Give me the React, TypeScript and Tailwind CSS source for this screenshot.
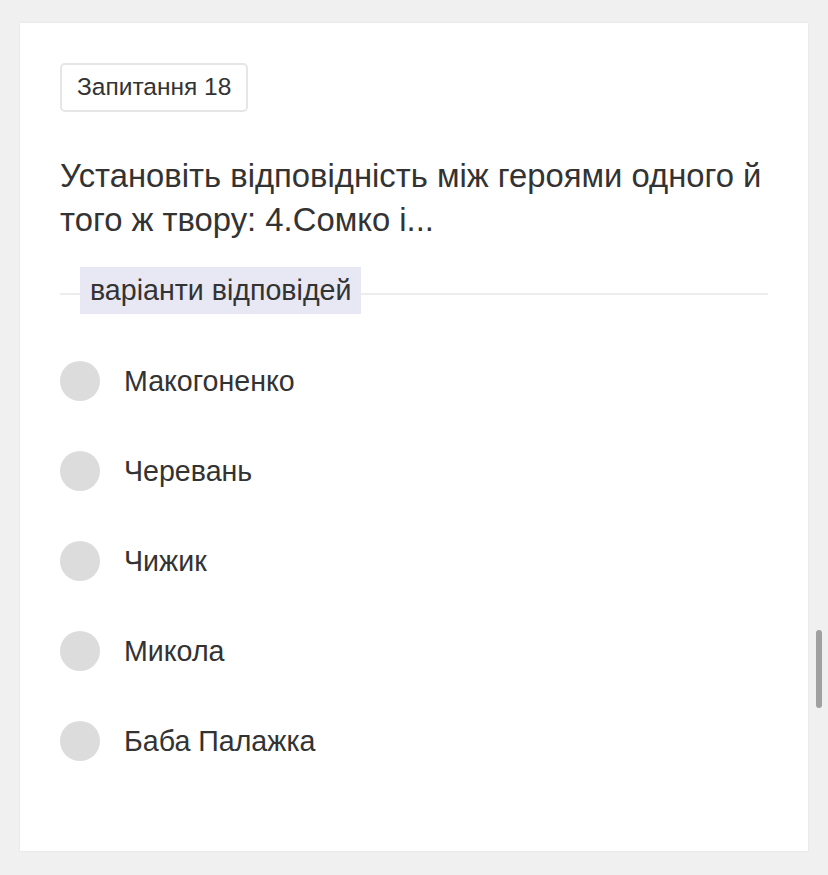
import React from "react";

const options = ["Макогоненко", "Черевань", "Чижик", "Микола", "Баба Палажка"];

export default function App() {
  return (
    <div
      className="relative w-[828px] h-[875px] bg-[#f0f0f0] pt-[23px] pl-[20px] overflow-hidden"
      style={{ fontFamily: '"Liberation Sans", Arial, sans-serif' }}
    >
      <div className="w-[788px] h-[828px] bg-white shadow-[0_0_2px_rgba(0,0,0,0.08)] px-[40px] pt-[40px]">
        <div className="inline-flex items-center h-[49px] px-[15px] border-2 border-[#e6e6e6] rounded-[5px] text-[24.5px] text-[#333]">
          Запитання 18
        </div>
        <div className="mt-[42px] -mr-[10px] text-[32.8px] leading-[44px] text-[#333]">
          Установіть відповідність між героями одного й того ж твору: 4.Сомко і...
        </div>
        <div className="relative mt-[25px] h-[47px] flex items-center">
          <div className="absolute left-0 right-0 top-[26px] h-[2px] bg-[#ececec]" />
          <div className="relative ml-[20px] h-[47px] px-[10px] flex items-center bg-[#e8e8f5] text-[28.6px] text-[#333]">
            варіанти відповідей
          </div>
        </div>
        <div className="mt-[47px] flex flex-col gap-[50px]">
          {options.map((o) => (
            <div key={o} className="flex items-center h-[40px]">
              <div className="w-[40px] h-[40px] rounded-full bg-[#dcdcdc]" />
              <div className="ml-[24px] text-[28.6px] text-[#333]">{o}</div>
            </div>
          ))}
        </div>
      </div>
      <div className="absolute left-[816px] top-[630px] w-[6px] h-[78px] rounded-full bg-[#a0a0a0]" />
    </div>
  );
}
